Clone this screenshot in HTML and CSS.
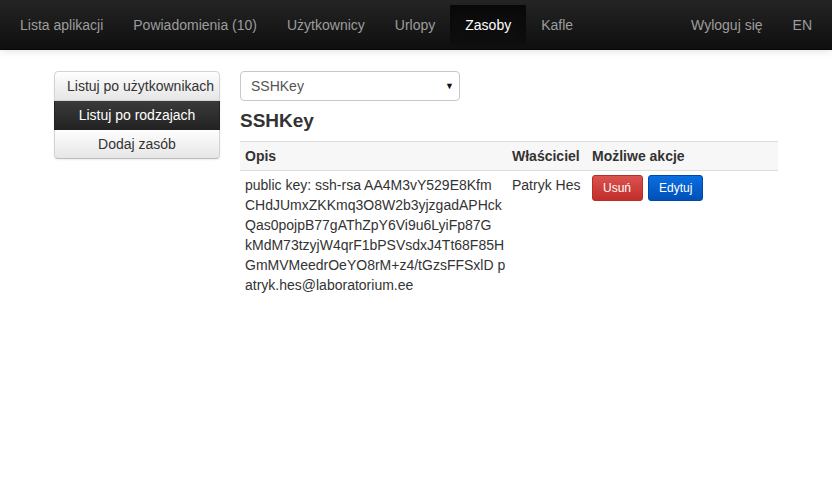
FILE: index.html
```html
<!DOCTYPE html>
<html lang="pl">
<head>
<meta charset="utf-8">
<title>Zasoby</title>
<link rel="stylesheet" href="styles.css">
</head>
<body>
<nav class="navbar">
  <ul class="nav">
    <li><a href="#">Lista aplikacji</a></li>
    <li><a href="#">Powiadomienia (10)</a></li>
    <li><a href="#">Użytkownicy</a></li>
    <li><a href="#">Urlopy</a></li>
    <li class="active"><a href="#">Zasoby</a></li>
    <li><a href="#">Kafle</a></li>
  </ul>
  <ul class="nav nav-right">
    <li><a href="#">Wyloguj się</a></li>
    <li><a href="#">EN</a></li>
  </ul>
</nav>
<div class="main">
  <div class="side">
    <a class="side-item" href="#">Listuj po użytkownikach</a>
    <a class="side-item active" href="#">Listuj po rodzajach</a>
    <a class="side-item" href="#">Dodaj zasób</a>
  </div>
  <div class="content">
    <div class="select"><span>SSHKey</span><span class="arrow">▼</span></div>
    <h4 class="title">SSHKey</h4>
    <table class="table">
      <thead>
        <tr><th class="c1">Opis</th><th class="c2">Właściciel</th><th class="c3">Możliwe akcje</th></tr>
      </thead>
      <tbody>
        <tr>
          <td class="key">public key: ssh-rsa AA4M3vY529E8Kfm<br>CHdJUmxZKKmq3O8W2b3yjzgadAPHck<br>Qas0pojpB77gAThZpY6Vi9u6LyiFp87G<br>kMdM73tzyjW4qrF1bPSVsdxJ4Tt68F85H<br>GmMVMeedrOeYO8rM+z4/tGzsFFSxlD p<br>atryk.hes@laboratorium.ee</td>
          <td>Patryk Hes</td>
          <td><span class="actions"><a class="btn btn-red" href="#">Usuń</a><a class="btn btn-blue" href="#">Edytuj</a></span></td>
        </tr>
      </tbody>
    </table>
  </div>
</div>
</body>
</html>
```
FILE: styles.css
```css
* { box-sizing: border-box; }
html, body { margin: 0; padding: 0; background: #fff; }
body {
  font-family: "Liberation Sans", Arial, sans-serif;
  font-size: 14px;
  line-height: 20px;
  color: #333;
}
a { text-decoration: none; }

.navbar {
  height: 50px;
  background: linear-gradient(to bottom, #242424 0%, #0f0f0f 100%);
  display: flex;
  justify-content: space-between;
  padding: 0 5px;
  box-shadow: 0 1px 8px rgba(0,0,0,0.12);
  border-bottom: 1px solid #080808;
}
.nav { list-style: none; margin: 0; padding: 0; display: flex; }
.nav li { display: flex; align-items: center; }
.nav a {
  display: block;
  padding: 10px 15px;
  color: #9d9d9d;
  line-height: 20px;
}
.nav li.active a {
  color: #fff;
  background: linear-gradient(to bottom, #0a0a0a 0%, #0f0f0f 100%);
  box-shadow: inset 0 3px 9px rgba(0,0,0,0.25);
}

.main {
  width: 724px;
  margin: 21px auto 0;
  display: flex;
  gap: 20px;
  align-items: flex-start;
}
.side {
  width: 166px;
  flex: none;
  display: flex;
  flex-direction: column;
  border-radius: 4px;
  box-shadow: 0 1px 2px rgba(0,0,0,0.075);
}
.side-item {
  display: block;
  text-align: center;
  color: #333;
  padding: 4px 12px;
  line-height: 20px;
  border: 1px solid #d3d3d3;
  border-top: none;
  background: linear-gradient(to bottom, #fefefe 0%, #e6e6e6 100%);
  white-space: nowrap;
}
.side-item:first-child { border-top: 1px solid #d3d3d3; border-radius: 4px 4px 0 0; }
.side-item:last-child { border-radius: 0 0 4px 4px; border-bottom-color: #bdbdbd; }
.side-item.active {
  color: #fff;
  background: linear-gradient(to bottom, #3a3a3a 0%, #232323 100%);
  border-color: #222;
}

.content { flex: 1; min-width: 0; }
.select {
  width: 220px;
  height: 30px;
  border: 1px solid #c8c8c8;
  border-radius: 4px;
  padding: 4px 10px;
  color: #555;
  display: flex;
  justify-content: space-between;
  align-items: center;
  background: #fff;
}
.select .arrow { font-size: 9px; color: #111; margin-right: -5px; }

.title {
  font-size: 19px;
  font-weight: bold;
  line-height: 22px;
  margin: 9px 0 9px;
  color: #333;
}

.table { width: 100%; border-collapse: collapse; table-layout: fixed; }
.table th, .table td {
  padding: 4px 5px;
  text-align: left;
  vertical-align: top;
  line-height: 20px;
}
.table th { font-weight: bold; border-top: 1px solid #ddd; border-bottom: 1px solid #ddd; background: #f7f7f7; }
.c1 { width: 267px; }
.c2 { width: 80px; }
.table td.key { white-space: nowrap; }
.actions { display: flex; gap: 5px; }
.btn {
  display: inline-block;
  font-size: 12px;
  line-height: 16px;
  padding: 4px 10px;
  border-radius: 3px;
  color: #fff;
  border: 1px solid;
}
.btn-red {
  padding-right: 11px;
  background: linear-gradient(to bottom, #d9534f 0%, #c12e2a 100%);
  border-color: #b92c28;
}
.btn-blue {
  background: linear-gradient(to bottom, #0a6fe0 0%, #0050b8 100%);
  border-color: #0049a8;
}
```
